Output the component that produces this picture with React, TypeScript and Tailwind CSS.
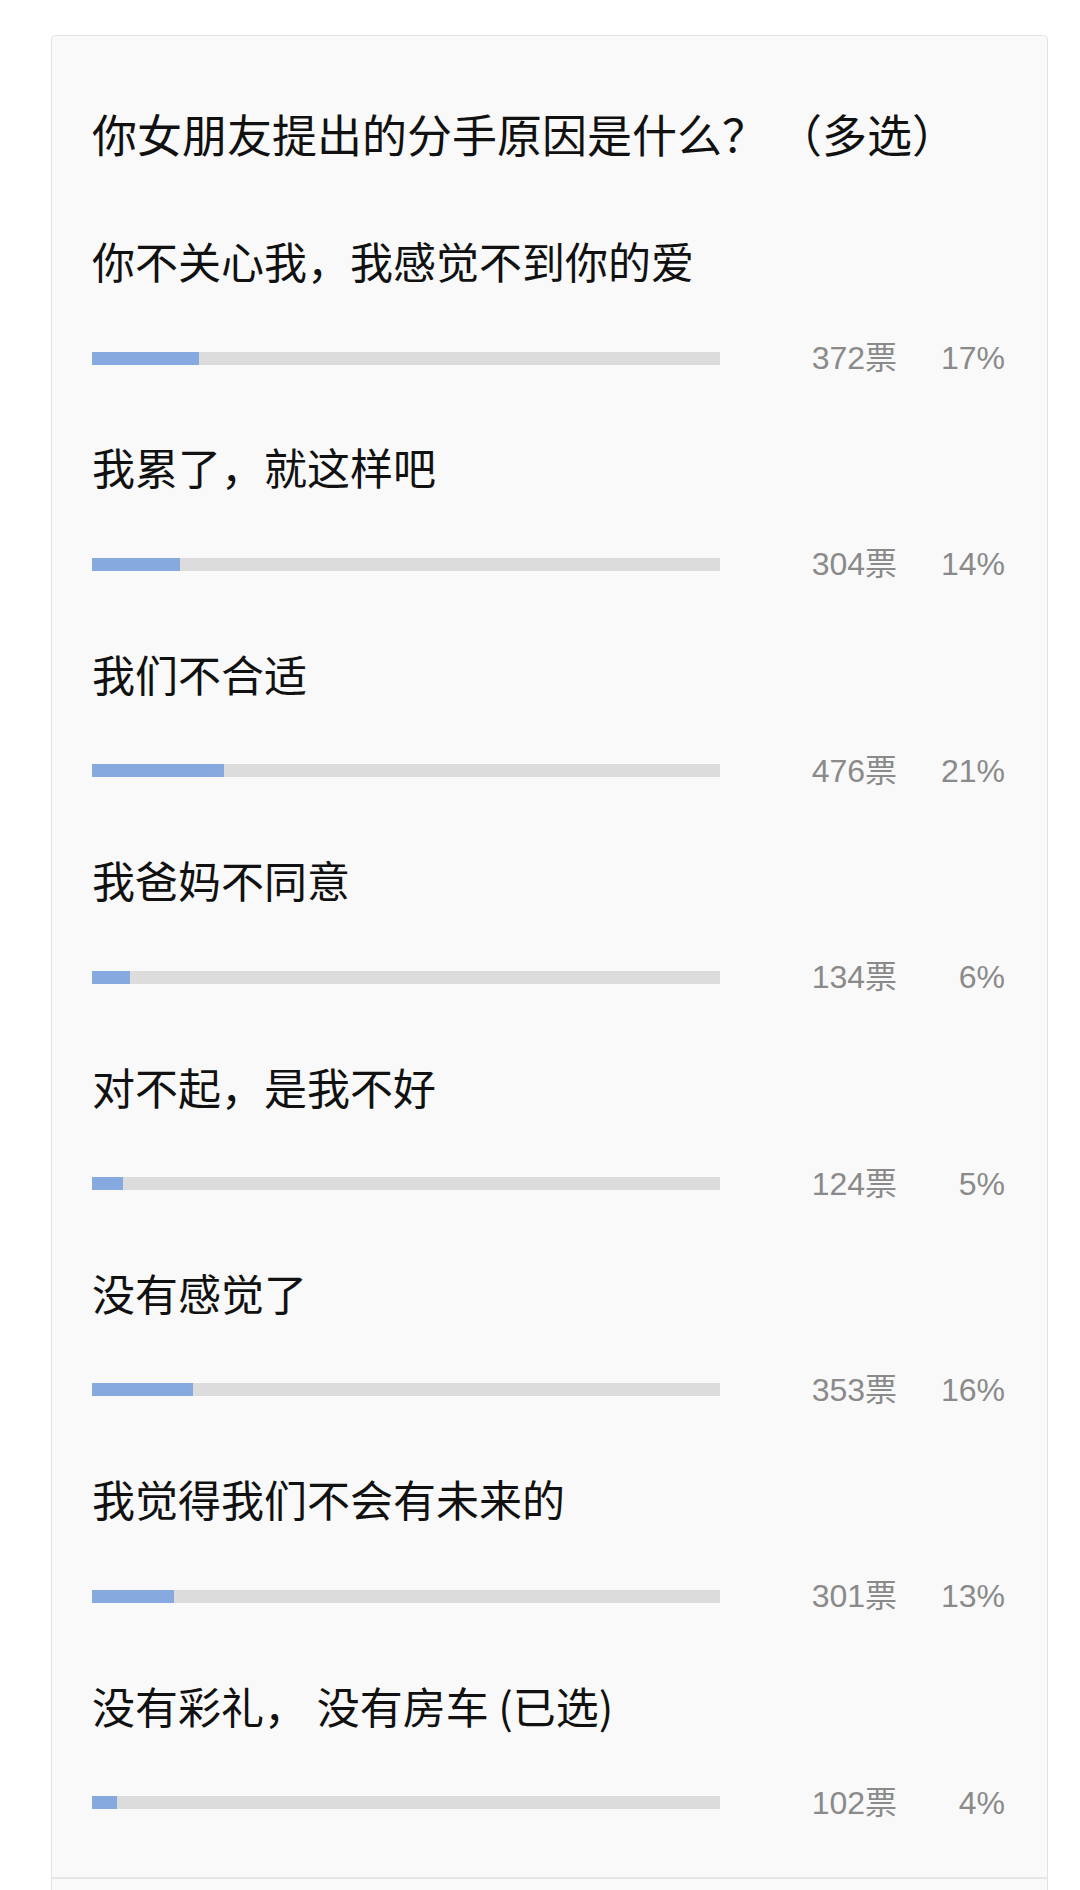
import React from "react";

const options = [
  { text: "你不关心我，我感觉不到你的爱", votes: 372, pct: 17 },
  { text: "我累了，就这样吧", votes: 304, pct: 14 },
  { text: "我们不合适", votes: 476, pct: 21 },
  { text: "我爸妈不同意", votes: 134, pct: 6 },
  { text: "对不起，是我不好", votes: 124, pct: 5 },
  { text: "没有感觉了", votes: 353, pct: 16 },
  { text: "我觉得我们不会有未来的", votes: 301, pct: 13 },
  { text: "没有彩礼， 没有房车 (已选)", votes: 102, pct: 4 },
];

const cjk = { fontFamily: '"Noto Sans CJK SC", "Noto Sans", sans-serif' };
const num = { fontFamily: '"Liberation Sans", "Noto Sans CJK SC", sans-serif' };

export default function App() {
  return (
    <div className="w-[1080px] h-[1890px] overflow-hidden bg-white">
      <div className="ml-[51px] mt-[35px] w-[997px] h-[1900px] rounded-[4px] border border-[#e4e4e4] bg-[#f9f9f9] flex flex-col">
        <div className="pl-[40px] pr-[42px] pt-[68px]">
          <div className="text-[45px] leading-[60px] text-[#111111]" style={cjk}>
            你女朋友提出的分手原因是什么？ （多选）
          </div>
          <div className="mt-[68px] flex flex-col">
            {options.map((o, i) => (
              <div key={i} className="h-[206.4px] flex flex-col">
                <div className="h-[56px] text-[43px] leading-[56px] text-[#111111] whitespace-pre" style={cjk}>
                  {o.text}
                </div>
                <div className="mt-[50px] h-[40px] flex items-center">
                  <div className="w-[629px] h-[13px] bg-[#dcdcdc]">
                    <div className="h-full bg-[#86a9df]" style={{ width: `${o.pct}%` }} />
                  </div>
                  <div className="w-[177px] text-right text-[32px] leading-[40px] text-[#8a8a8a]" style={num}>
                    {o.votes}票
                  </div>
                  <div className="w-[108px] text-right text-[32px] leading-[40px] text-[#8a8a8a]" style={num}>
                    {o.pct}%
                  </div>
                </div>
              </div>
            ))}
          </div>
        </div>
        <div className="mt-[-6px] h-[2px] bg-[#e6e6e6]" />
      </div>
    </div>
  );
}
